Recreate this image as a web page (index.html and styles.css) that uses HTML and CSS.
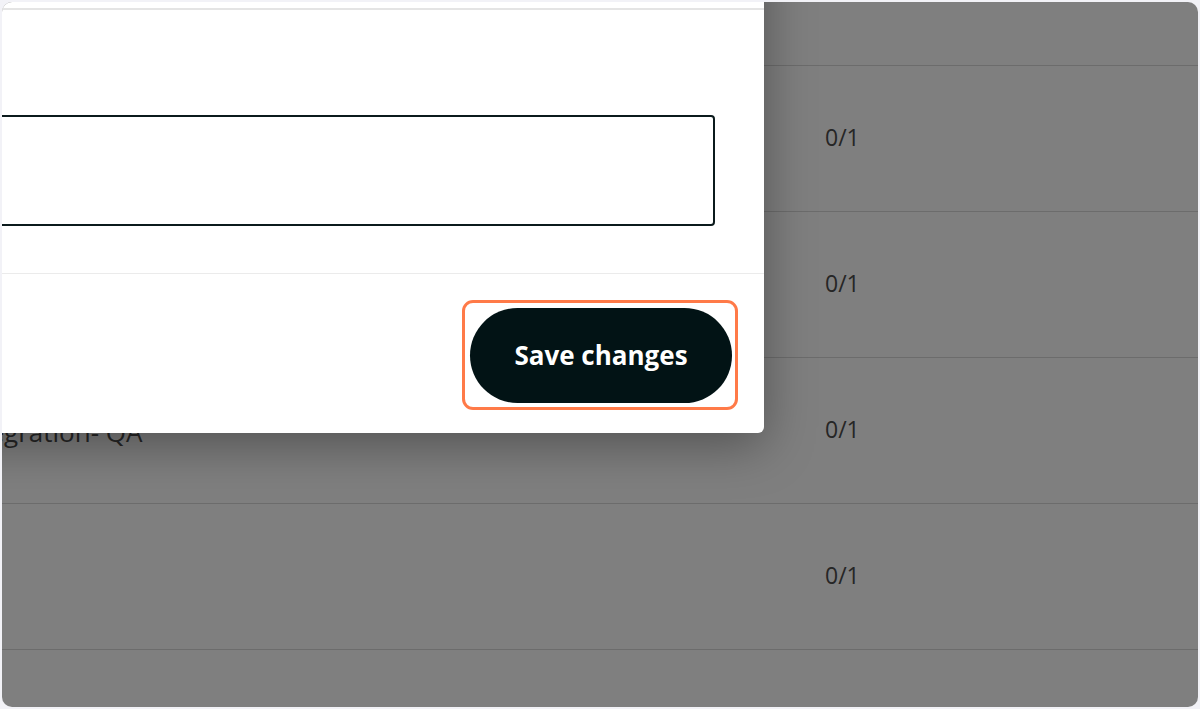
FILE: index.html
```html
<!DOCTYPE html>
<html lang="en">
<head>
    <meta charset="UTF-8">
    <meta name="viewport" content="width=device-width, initial-scale=1.0">
    <title>Save changes</title>
    <link rel="stylesheet" href="styles.css">
</head>
<body>

    <div class="frame">

        <!-- table under the dialog -->
        <div class="table">
            <div class="row">
                <div class="cell-name"></div>
                <div class="cell-count">0/1</div>
            </div>
            <div class="row">
                <div class="cell-name"></div>
                <div class="cell-count">0/1</div>
            </div>
            <div class="row">
                <div class="cell-name"></div>
                <div class="cell-count">0/1</div>
            </div>
            <div class="row">
                <div class="cell-name">Integration- QA</div>
                <div class="cell-count">0/1</div>
            </div>
            <div class="row">
                <div class="cell-name"></div>
                <div class="cell-count">0/1</div>
            </div>
            <div class="row">
                <div class="cell-name"></div>
                <div class="cell-count"></div>
            </div>
        </div>

        <div class="overlay"></div>

        <!-- dialog -->
        <div class="modal">
            <div class="modal-header"></div>
            <div class="modal-body">
                <div class="field"></div>
            </div>
            <div class="modal-footer">
                <span class="highlight">
                    <button class="btn-save">Save changes</button>
                </span>
            </div>
        </div>

    </div>

</body>
</html>
```

FILE: styles.css
```css
* {
    margin: 0;
    padding: 0;
    box-sizing: border-box;
}
html, body {
    width: 100%;
    height: 100%;
    background: #f2f2f7;
    font-family: 'Open Sans', sans-serif;
    overflow: hidden;
}
.frame {
    position: relative;
    margin: 2px;
    height: 705px;
    border-radius: 10px;
    overflow: hidden;
    background: #fff;
}
/* TABLE */
.table {
    margin-top: -82px;
    margin-left: -50px;
}
.row {
    display: grid;
    grid-template-columns: 873px 1fr;
    align-items: center;
    height: 146px;
    border-bottom: 1px solid #d8d8d8;
    font-size: 23px;
    color: #4c4c4c;
}
.cell-count {
    padding-bottom: 3px;
}
.cell-name {
    font-size: 26px;
    padding: 2px 0 0 5px;
}
.overlay {
    position: absolute;
    inset: 0;
    background: rgba(0, 0, 0, 0.5);
}
/* DIALOG */
.modal {
    position: absolute;
    top: -60px;
    left: -400px;
    width: 1162px;
    background: #fff;
    border-radius: 0 0 6px 0;
    box-shadow: 0 12px 50px rgba(0, 0, 0, 0.35);
}
.modal-header {
    height: 68px;
    border-bottom: 2px solid #e4e4e4;
}
.modal-body {
    padding: 105px 49px 47px 0;
}
.field {
    height: 111px;
    border: 2px solid #0b1a1c;
    border-radius: 4px;
}
.modal-footer {
    display: flex;
    justify-content: flex-end;
    border-top: 1px solid #ebebeb;
    padding: 26px 26px 23px;
}
.highlight {
    display: block;
    border: 3px solid #ff7a48;
    border-radius: 11px;
    padding: 5px 3px 4px 5px;
}
.btn-save {
    display: block;
    width: 262px;
    height: 95px;
    border: none;
    border-radius: 48px;
    background: #021315;
    color: #fff;
    font-family: 'Open Sans', sans-serif;
    font-size: 26px;
    font-weight: bold;
    padding-bottom: 2px;
    cursor: pointer;
}
```
